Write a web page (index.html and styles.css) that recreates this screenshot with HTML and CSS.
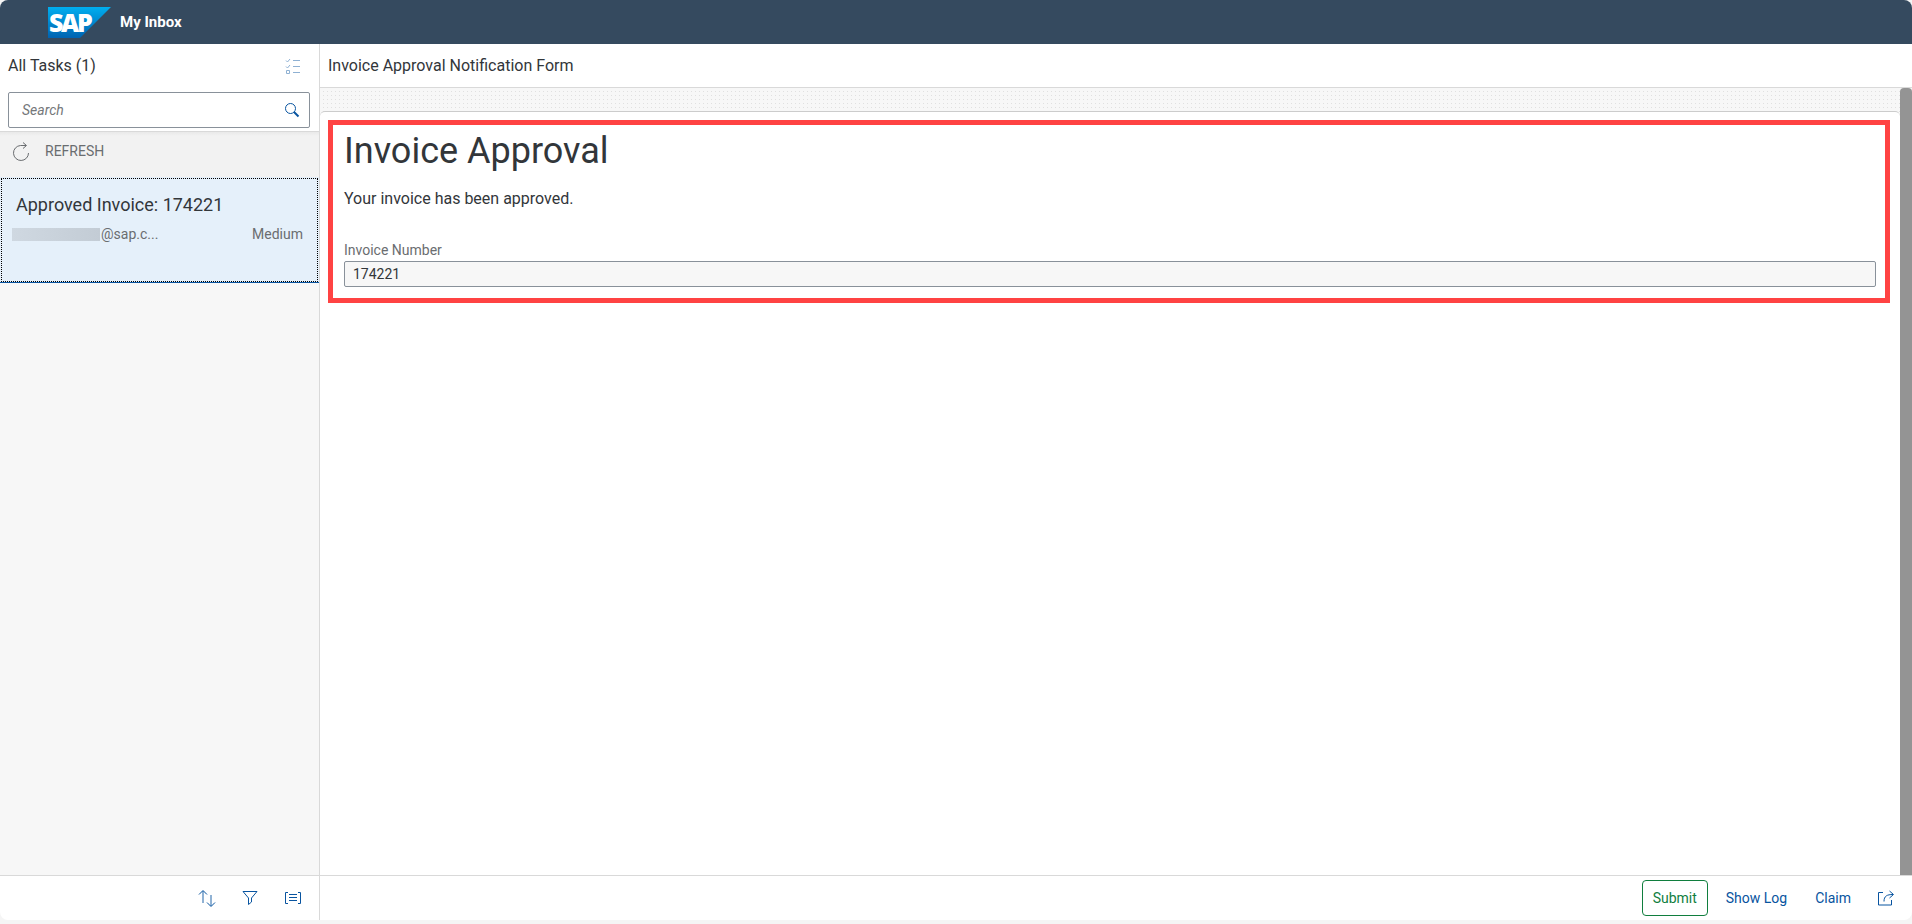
FILE: index.html
```html
<!DOCTYPE html>
<html lang="en">
<head>
<meta charset="utf-8">
<meta name="viewport" content="width=device-width, initial-scale=1">
<title>My Inbox</title>
<link rel="stylesheet" href="styles.css">
</head>
<body>
<div class="shell">
  <header class="shell-bar">
    <svg class="logo" viewBox="0 0 63 31" role="img" aria-label="SAP">
      <defs><linearGradient id="logo-fill" x1="0" y1="0" x2="0" y2="1"><stop offset="0" stop-color="#00aeef"/><stop offset="1" stop-color="#0063b1"/></linearGradient></defs>
      <path d="M0 0H63L32 31H0Z" fill="url(#logo-fill)"/>
      <text class="logo-text" x="1 13 29" y="25">SAP</text>
    </svg>
    <h1 class="app-title">My Inbox</h1>
  </header>

  <div class="panes">
    <aside class="master">
      <div class="master-head">
        <div class="title-row">
          <h2 class="pane-title">All Tasks (1)</h2>
          <button class="icon-button muted" type="button" aria-label="Multiple selection">
            <svg width="16" height="16" viewBox="0 0 16 16"><path d="M1 2.500L2.500 4L5 1M1 8.500L2.500 10L5 7M1.500 12.500h3v3h-3zM8 2.500h7M8 8.500h7M8 14.500h7"/></svg>
          </button>
        </div>
        <form class="search" role="search">
          <input class="search-input" type="text" placeholder="Search" aria-label="Search tasks">
          <button class="icon-button" type="button" aria-label="Search">
            <svg width="16" height="16" viewBox="0 0 16 16"><circle cx="6.500" cy="6.500" r="5"/><path d="M10 10L14.500 14.500" stroke-width="2"/></svg>
          </button>
        </form>
      </div>
      <button class="refresh" type="button">
        <svg width="18" height="20" viewBox="0 0 18 20"><path d="M14 3.500H8.500A7.500 7.500 0 1 0 16.500 11M11 .5L14.500 3.500L11 6.500"/></svg>
        <span>REFRESH</span>
      </button>
      <a class="task" href="#task">
        <span class="task-title">Approved Invoice: 174221</span>
        <span class="task-meta">
          <span class="redacted"></span><span class="sender">@sap.c...</span><span class="priority">Medium</span>
        </span>
      </a>
    </aside>

    <main class="detail">
      <header class="detail-head"><h2 class="pane-title">Invoice Approval Notification Form</h2></header>
      <div class="detail-body">
        <div class="canvas">
          <div class="sheet">
            <section class="form" id="task">
              <h3 class="form-title">Invoice Approval</h3>
              <p class="form-text">Your invoice has been approved.</p>
              <label class="form-label" for="invoice">Invoice Number</label>
              <input class="form-input" id="invoice" type="text" value="174221" readonly>
            </section>
          </div>
        </div>
        <div class="scrollbar"></div>
      </div>
    </main>
  </div>

  <footer class="footer">
    <div class="list-tools">
      <button class="icon-button" type="button" aria-label="Sort">
        <svg width="18" height="18" viewBox="0 0 18 18"><path class="soft" d="M5 2V14M13 6V17"/><path d="M1 5.500L5 1.500L9 5.500M9 13.500L13 17.500L17 13.500"/></svg>
      </button>
      <button class="icon-button" type="button" aria-label="Filter">
        <svg width="16" height="16" viewBox="0 0 16 16"><path d="M1 1.500H15L9.500 8V12L6.500 14.500V8Z"/></svg>
      </button>
      <button class="icon-button" type="button" aria-label="Group">
        <svg width="18" height="14" viewBox="0 0 18 14"><path d="M4 1.500H1.500V12.500H4M14 1.500H16.500V12.500H14M5 3.500H13M5 6.500H13M5 9.500H13"/></svg>
      </button>
    </div>
    <div class="actions">
      <button class="action submit" type="button">Submit</button>
      <button class="action" type="button">Show Log</button>
      <button class="action" type="button">Claim</button>
      <button class="icon-button" type="button" aria-label="Share">
        <svg width="18" height="16" viewBox="0 0 18 16"><path d="M6 2.500H1.500V15H14.500V10M7 11.500C7 6 10 4.500 16 4.500M12.500 1L16.500 4.500L12.500 8"/></svg>
      </button>
    </div>
  </footer>
</div>
</body>
</html>
```
FILE: styles.css
```css
* { box-sizing: border-box; }

body {
  margin: 0;
  background: #f5f5f5;
  color: #32363a;
  font-family: Roboto, "Liberation Sans", sans-serif;
  font-size: 14px;
  line-height: 20px;
}

h1, h2, h3, p { margin: 0; font-weight: 400; }
button, input { font: inherit; color: inherit; }
button { padding: 0; border: 0; background: none; cursor: pointer; }
svg { display: block; fill: none; stroke: currentColor; }

.shell {
  display: flex;
  flex-direction: column;
  min-height: 100vh;
  padding-bottom: 4px;
}

.shell-bar {
  display: flex;
  align-items: center;
  gap: 9px;
  height: 44px;
  padding: 0 48px;
  border-radius: 8px 8px 0 0;
  background: #354a5f;
  color: #fff;
}
.logo { width: 63px; height: 31px; overflow: visible; stroke: none; }
.logo-text { fill: #fff; font: 900 25px "Open Sans", sans-serif; }
.app-title { font-size: 15px; font-weight: 700; }

.panes { display: flex; flex: 1; }

.master {
  display: flex;
  flex-direction: column;
  width: 320px;
  border-right: 1px solid #d9d9d9;
  background: #f7f7f7;
}
.master-head {
  padding: 0 9px 3px 8px;
  border-bottom: 1px solid #d9d9d9;
  background: #fff;
}
.title-row {
  display: flex;
  align-items: center;
  justify-content: space-between;
  height: 48px;
  padding: 0 9px 4px 0;
}
.pane-title { font-size: 16px; }
.icon-button { color: #0854a0; }
.muted { opacity: .45; }
.search {
  display: flex;
  align-items: center;
  height: 36px;
  padding: 0 9px 0 13px;
  border: 1px solid #89919a;
  border-radius: 2px;
}
.search-input { flex: 1; min-width: 0; padding: 0; border: 0; outline: 0; }
.search-input::placeholder { color: #74777a; font-style: italic; }

.refresh {
  display: flex;
  align-items: center;
  gap: 15px;
  height: 45px;
  padding: 0 12px 7px;
  background: linear-gradient(#e9e9e9, #f2f2f2 4px);
  color: #6a6d70;
}
.refresh svg { margin-top: 2px; }

.task {
  display: flex;
  flex-direction: column;
  gap: 9px;
  height: 106px;
  padding: 18px 16px 0 12px;
  outline: 1px dotted #000;
  outline-offset: -2px;
  border-bottom: 1px solid #0854a0;
  background: #e5f0fa;
  color: #32363a;
  text-decoration: none;
}
.task-title { padding-left: 4px; font-size: 18px; }
.task-meta { display: flex; align-items: center; color: #6a6d70; }
.redacted { width: 88px; height: 13px; background: linear-gradient(90deg, #cfd8e1, #c3ccd5); }
.sender { padding-left: 1px; }
.priority { margin-left: auto; }

.detail { display: flex; flex: 1; flex-direction: column; min-width: 0; }
.detail-head {
  height: 44px;
  padding: 12px 8px 0;
  border-bottom: 1px solid #d9d9d9;
  background: #fff;
}
.detail-body { display: flex; flex: 1; }
.canvas {
  display: flex;
  flex: 1;
  min-width: 0;
  padding-top: 23px;
  background: #f7f7f7 conic-gradient(#e0e0e0 25%, transparent 0) 3px 0 / 4px 4px;
  background: linear-gradient(#f7f7f7 3px, transparent 3px) 0 0 / 4px 4px,
    linear-gradient(90deg, #f7f7f7 3px, #e0e0e0 3px) 0 0 / 4px 4px;
}
.sheet {
  flex: 1;
  min-width: 0;
  padding: 8px 10px 8px 8px;
  border-top: 1px solid #ccc;
  border-radius: 5px 5px 0 0;
  background: #fff;
}
.scrollbar { width: 12px; border-radius: 4px 4px 0 0; background: #949494; }

.form {
  display: flex;
  flex-direction: column;
  padding: 4px 9px 11px 11px;
  border: 5px solid #ff4343;
}
.form-title { font-size: 36px; line-height: 44px; }
.form-text { margin-top: 16px; font-size: 16px; }
.form-label { margin-top: 31px; color: #6a6d70; }
.form-input {
  width: 100%;
  height: 26px;
  margin-top: 1px;
  padding: 0 8px;
  border: 1px solid #89919a;
  border-radius: 2px;
  background: #f7f7f7;
}

.footer {
  display: flex;
  height: 45px;
  border-top: 1px solid #d9d9d9;
  border-radius: 0 0 8px 8px;
  background: #fff;
}
.list-tools {
  display: flex;
  align-items: center;
  justify-content: flex-end;
  gap: 26px;
  width: 320px;
  padding-right: 17px;
  border-right: 1px solid #d9d9d9;
}
.soft { opacity: .45; stroke-width: 2; }
.actions {
  display: flex;
  flex: 1;
  align-items: center;
  justify-content: flex-end;
  gap: 8px;
  padding-right: 17px;
}
.action { height: 36px; padding: 0 10px; color: #0854a0; }
.submit { border: 1px solid #107e3e; border-radius: 4px; color: #107e3e; }
.action + .icon-button { margin-left: 8px; }
```
